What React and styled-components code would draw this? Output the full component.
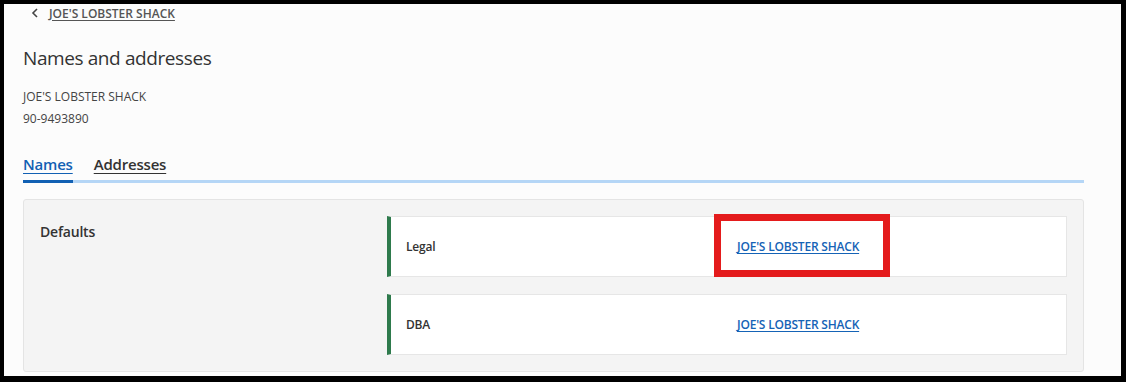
import React from "react";
import styled, { createGlobalStyle } from "styled-components";

const GlobalStyle = createGlobalStyle`
  html, body {
    margin: 0;
    padding: 0;
    background: #000;
  }
  body {
    font-family: "Open Sans", "Liberation Sans", sans-serif;
    color: #333;
  }
`;

const Frame = styled.div`
  box-sizing: border-box;
  width: 1126px;
  height: 382px;
  border-style: solid;
  border-color: #000;
  border-width: 4px 5px 6px 4px;
  background: #fcfcfc;
  overflow: hidden;
`;

const Page = styled.div`
  display: flex;
  flex-direction: column;
  padding: 0 37px 0 19px;
`;

const BackRow = styled.div`
  display: flex;
  align-items: center;
  gap: 10px;
  height: 18px;
  padding-left: 8px;
`;

const BackLink = styled.a`
  font-size: 12px;
  font-weight: 600;
  color: #555;
  text-decoration: underline;
  text-underline-offset: 2px;
`;

const Title = styled.h1`
  margin: 22px 0 0 0;
  font-size: 19px;
  line-height: 28px;
  font-weight: 400;
  color: #333;
  letter-spacing: -0.4px;
`;

const MetaBlock = styled.div`
  display: flex;
  flex-direction: column;
  margin-top: 14px;
`;

const Meta = styled.div`
  font-size: 12px;
  line-height: 22px;
  color: #444;
`;

const Tabs = styled.div`
  display: flex;
  gap: 21px;
  margin-top: 23px;
  border-bottom: 3px solid #b5d6f6;
`;

const Tab = styled.a`
  position: relative;
  font-size: 15px;
  line-height: 22px;
  font-weight: 600;
  padding-bottom: 5px;
  color: ${(p) => (p.$active ? "#1160b3" : "#333")};
  text-decoration: underline;
  text-underline-offset: 3px;
  text-decoration-thickness: 1px;
  letter-spacing: -0.2px;
  &::after {
    content: "";
    position: absolute;
    left: 0;
    right: 0;
    bottom: -3px;
    height: 3px;
    background: ${(p) => (p.$active ? "#1160b3" : "transparent")};
  }
`;

const Panel = styled.section`
  display: grid;
  grid-template-columns: 347px 1fr;
  margin-top: 16px;
  padding: 16px;
  background: #f4f4f4;
  border: 1px solid #e4e4e4;
  border-radius: 3px;
`;

const PanelLabel = styled.div`
  padding-top: 6px;
  font-size: 14px;
  line-height: 20px;
  font-weight: 600;
  color: #333;
  letter-spacing: -0.2px;
`;

const CardList = styled.div`
  display: flex;
  flex-direction: column;
  gap: 17px;
`;

const Card = styled.div`
  position: relative;
  box-sizing: border-box;
  display: grid;
  grid-template-columns: 331px 1fr;
  align-items: center;
  height: 61px;
  padding: 0 15px;
  background: #fff;
  border: 1px solid #e6e6e6;
  border-left: 4px solid #2e7a4c;
`;

const CardLabel = styled.div`
  font-size: 12px;
  font-weight: 600;
  color: #333;
  letter-spacing: -0.2px;
`;

const CardValue = styled.a`
  font-size: 12px;
  font-weight: 600;
  color: #1563b6;
  text-decoration: underline;
  text-underline-offset: 2px;
  letter-spacing: -0.2px;
`;

const Highlight = styled.div`
  position: absolute;
  left: 323px;
  top: -3px;
  width: 176px;
  height: 63px;
  box-sizing: border-box;
  border: 7px solid #e41b1c;
  pointer-events: none;
`;

const Chevron = () => (
  <svg width="8" height="10" viewBox="0 0 8 10" fill="none">
    <path d="M6 1L2 5l4 4" stroke="#444" strokeWidth="1.6" />
  </svg>
);

const names = [
  { type: "Legal", value: "JOE'S LOBSTER SHACK", highlighted: true },
  { type: "DBA", value: "JOE'S LOBSTER SHACK" },
];

export default function App() {
  return (
    <>
      <GlobalStyle />
      <Frame>
        <Page>
          <BackRow>
            <Chevron />
            <BackLink href="#">JOE'S LOBSTER SHACK</BackLink>
          </BackRow>
          <Title>Names and addresses</Title>
          <MetaBlock>
            <Meta>JOE'S LOBSTER SHACK</Meta>
            <Meta>90-9493890</Meta>
          </MetaBlock>
          <Tabs>
            <Tab href="#" $active>
              Names
            </Tab>
            <Tab href="#">Addresses</Tab>
          </Tabs>
          <Panel>
            <PanelLabel>Defaults</PanelLabel>
            <CardList>
              {names.map((n) => (
                <Card key={n.type}>
                  <CardLabel>{n.type}</CardLabel>
                  <CardValue href="#">{n.value}</CardValue>
                  {n.highlighted && <Highlight />}
                </Card>
              ))}
            </CardList>
          </Panel>
        </Page>
      </Frame>
    </>
  );
}
